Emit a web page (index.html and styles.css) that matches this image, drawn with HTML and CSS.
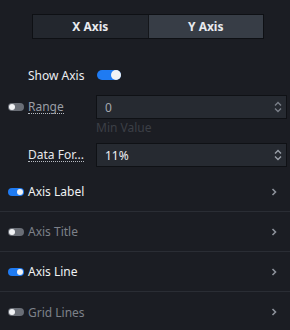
FILE: index.html
```html
<!DOCTYPE html>
<html>
<head>
  <meta charset="utf-8">
  <link rel="stylesheet" href="styles.css">
</head>
<body>
  <div class="panel">
    <div class="tabs">
      <div class="tab">X Axis</div>
      <div class="tab active">Y Axis</div>
    </div>

    <div class="show-row">
      <span class="show-label">Show Axis</span>
      <span class="switch on big"><span class="knob"></span></span>
    </div>

    <div class="field-row">
      <div class="field-label">
        <span class="switch"><span class="knob"></span></span>
        <span class="hint dim">Range</span>
      </div>
      <div class="input">
        <span class="value dim">0</span>
        <svg class="spin" width="8" height="12" viewBox="0 0 8 12"><path d="M1 4.5 L4 1.5 L7 4.5 M1 7.5 L4 10.5 L7 7.5" fill="none" stroke="#7a7f88" stroke-width="1.4"/></svg>
      </div>
    </div>
    <div class="sub">Min Value</div>

    <div class="field-row second">
      <div class="field-label">
        <span class="hint">Data For...</span>
      </div>
      <div class="input">
        <span class="value">11%</span>
        <svg class="spin" width="8" height="12" viewBox="0 0 8 12"><path d="M1 4.5 L4 1.5 L7 4.5 M1 7.5 L4 10.5 L7 7.5" fill="none" stroke="#9a9fa8" stroke-width="1.4"/></svg>
      </div>
    </div>

    <div class="sections">
      <div class="section">
        <span class="switch on"><span class="knob"></span></span>
        <span class="section-title">Axis Label</span>
        <svg class="chev" width="6" height="8" viewBox="0 0 6 8"><path d="M1.5 1 L4.5 4 L1.5 7" fill="none" stroke="#8c919a" stroke-width="1.6"/></svg>
      </div>
      <div class="section">
        <span class="switch"><span class="knob"></span></span>
        <span class="section-title muted">Axis Title</span>
        <svg class="chev" width="6" height="8" viewBox="0 0 6 8"><path d="M1.5 1 L4.5 4 L1.5 7" fill="none" stroke="#8c919a" stroke-width="1.6"/></svg>
      </div>
      <div class="section">
        <span class="switch on"><span class="knob"></span></span>
        <span class="section-title">Axis Line</span>
        <svg class="chev" width="6" height="8" viewBox="0 0 6 8"><path d="M1.5 1 L4.5 4 L1.5 7" fill="none" stroke="#8c919a" stroke-width="1.6"/></svg>
      </div>
      <div class="section">
        <span class="switch"><span class="knob"></span></span>
        <span class="section-title muted">Grid Lines</span>
        <svg class="chev" width="6" height="8" viewBox="0 0 6 8"><path d="M1.5 1 L4.5 4 L1.5 7" fill="none" stroke="#8c919a" stroke-width="1.6"/></svg>
      </div>
    </div>
  </div>
</body>
</html>
```

FILE: styles.css
```css
body {
  margin: 0;
  width: 290px;
  height: 330px;
  background: #1b1d23;
  font-family: "Noto Sans", "Open Sans", sans-serif;
  font-size: 12px;
  color: #e6e8eb;
  overflow: hidden;
}

.panel {
  padding-top: 14px;
}

.tabs {
  display: flex;
  margin-left: 32px;
  width: 232px;
  height: 25px;
  box-sizing: border-box;
  border: 1px solid #0e1014;
}

.tab {
  flex: 1;
  display: flex;
  align-items: center;
  justify-content: center;
  background: #23272e;
  color: #e8eaee;
  font-weight: 700;
  font-size: 12px;
}

.tab.active {
  background: #373d46;
  border-left: 1px solid #14161a;
}

.show-row {
  display: flex;
  align-items: center;
  height: 20px;
  margin-top: 26px;
  padding-left: 28px;
  gap: 10px;
}

.show-label {
  color: #eceef1;
  width: 59px;
}

/* toggle switch */
.switch {
  position: relative;
  display: inline-block;
  width: 16px;
  height: 8px;
  border-radius: 4px;
  background: #6a6e76;
  flex-shrink: 0;
}

.switch .knob {
  position: absolute;
  top: 1px;
  left: 1px;
  width: 6px;
  height: 6px;
  border-radius: 50%;
  background: #f2f3f5;
}

.switch.on {
  background: #1f7bf2;
}

.switch.on .knob {
  left: 9px;
}

.switch.big {
  width: 24px;
  height: 10px;
  border-radius: 5px;
}

.switch.big .knob {
  top: 0;
  left: 14px;
  width: 10px;
  height: 10px;
}

.field-row {
  display: flex;
  align-items: center;
  margin-top: 10px;
}

.field-row.second {
  margin-top: 7px;
}

.field-label {
  width: 96px;
  display: flex;
  align-items: center;
  gap: 4px;
  padding-left: 8px;
  box-sizing: border-box;
}

.field-row.second .field-label {
  padding-left: 28px;
}

.hint {
  border-bottom: 1px dotted #b8bcc3;
  line-height: 13px;
  white-space: nowrap;
}

.muted {
  color: #7d8189;
}

.dim {
  color: #9a9ea5;
}

.input {
  width: 191px;
  height: 24px;
  box-sizing: border-box;
  border: 1px solid #0f1115;
  background: #262a31;
  display: flex;
  align-items: center;
  justify-content: space-between;
  padding: 0 4px 0 8px;
}

.value {
  color: #eef0f2;
}

.value.dim {
  color: #a4a8ae;
}

.sub {
  margin-left: 96px;
  margin-top: 1px;
  color: #3b3f46;
  height: 16px;
  line-height: 16px;
}

.sections {
  margin-top: 5px;
}

.section {
  display: flex;
  align-items: center;
  height: 40px;
  padding-left: 8px;
  padding-right: 13px;
  gap: 4px;
  border-bottom: 1px solid #2a2d34;
  box-sizing: border-box;
}

.section:last-child {
  border-bottom: none;
}

.section-title {
  flex: 1;
  color: #f0f2f4;
}

.section-title.muted {
  color: #7d8189;
}
```
